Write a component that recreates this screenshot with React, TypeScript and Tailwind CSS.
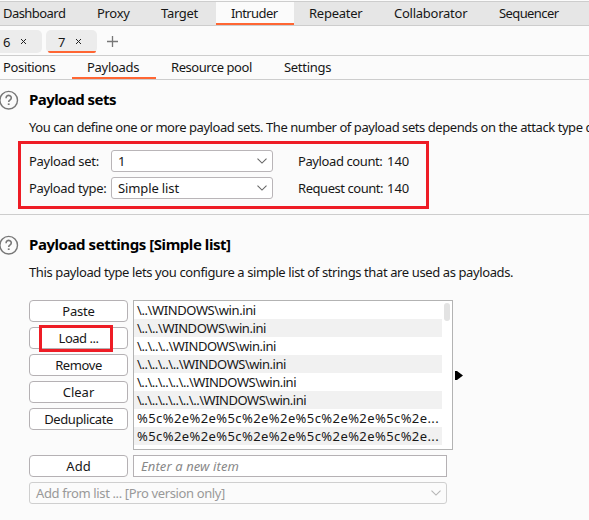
import React from "react";

const tabs = [
  { label: "Dashboard", cls: "w-[81px] pl-[3px] tracking-[-0.55px]" },
  { label: "Proxy", cls: "w-16 pl-4 tracking-[-0.3px]" },
  { label: "Target", cls: "w-[71px] pl-4 tracking-[-0.3px]" },
  { label: "Intruder", cls: "w-[78px] pl-[15px] bg-[#fbfbfb] border-b-2 border-[#ff6633] tracking-[-0.6px]" },
  { label: "Repeater", cls: "w-[85px] pl-[15px] tracking-[-0.25px]" },
  { label: "Collaborator", cls: "w-[105px] pl-[15px] tracking-[-0.25px]" },
  { label: "Sequencer", cls: "w-[105px] pl-[15px] tracking-[-0.6px]" },
];

const subTabs = [
  { label: "Positions", cls: "w-[72px] pl-[3px] tracking-[-0.35px]" },
  { label: "Payloads", cls: "w-[84px] pl-[15px] border-b-2 border-[#ff6633] tracking-[-0.3px]" },
  { label: "Resource pool", cls: "w-[113px] pl-[15px] tracking-[-0.45px]" },
  { label: "Settings", cls: "w-[90px] pl-[15px] tracking-[-0.3px]" },
];

const payloads = [
  { text: "\\..\\WINDOWS\\win.ini", cls: "tracking-[-0.4px]" },
  { text: "\\..\\..\\WINDOWS\\win.ini", cls: "tracking-[-0.42px]" },
  { text: "\\..\\..\\..\\WINDOWS\\win.ini", cls: "tracking-[-0.44px]" },
  { text: "\\..\\..\\..\\..\\WINDOWS\\win.ini", cls: "tracking-[-0.46px]" },
  { text: "\\..\\..\\..\\..\\..\\WINDOWS\\win.ini", cls: "tracking-[-0.47px]" },
  { text: "\\..\\..\\..\\..\\..\\..\\WINDOWS\\win.ini", cls: "tracking-[-0.48px]" },
  { text: "%5c%2e%2e%5c%2e%2e%5c%2e%2e%5c%2e...", cls: "tracking-[0.41px]" },
  { text: "%5c%2e%2e%5c%2e%2e%5c%2e%2e%5c%2e...", cls: "tracking-[0.41px]" },
];

function Help() {
  return (
    <svg className="-ml-px h-5 w-5 shrink-0" viewBox="0 0 20 20" fill="none" stroke="#777" strokeWidth="1.4">
      <circle cx="9.7" cy="10.2" r="8.8" />
      <path d="M7.1 8.2V7.9a2.6 2.4 0 1 1 4.1 1.9c-1 .7-1.5 1-1.5 2.1" strokeWidth="1.6" />
      <path d="M8.8 14.2h1.8" strokeWidth="1.6" />
    </svg>
  );
}

function Chevron({ color }: { color: string }) {
  return (
    <svg className="mr-[5px] h-[6px] w-[10px] shrink-0" viewBox="0 0 10 6" fill="none" stroke={color} strokeWidth="1.1">
      <path d="M.5.7 5 5.1 9.5.7" />
    </svg>
  );
}

function Cross() {
  return (
    <svg className="h-[7px] w-[7px]" viewBox="0 0 7 7" stroke="#222" strokeWidth="1">
      <path d="m1 1 5 5M6 1 1 6" />
    </svg>
  );
}

function Select({ value }: { value: string }) {
  return (
    <div className="flex h-[22px] w-[162px] items-center justify-between rounded-[3px] border border-[#b9b5b8] bg-white pl-[6px] tracking-[-0.12px]">
      <span>{value}</span>
      <Chevron color="#666" />
    </div>
  );
}

function Button({ label, cls = "" }: { label: string; cls?: string }) {
  return (
    <div className={`flex h-[22px] w-[99px] items-center justify-center rounded-[4px] border border-[#b5b1b4] bg-white ${cls}`}>
      {label}
    </div>
  );
}

export default function App() {
  return (
    <div className="flex h-[520px] w-[589px] flex-col overflow-hidden whitespace-pre bg-[#fbfbfb] font-['Noto_Sans',sans-serif] text-[13px] leading-[18px] text-[#171717]">
      <nav className="mt-px flex h-[25px] shrink-0 border-y border-[#cdcdcd] bg-[#e6e6e6]">
        {tabs.map((t) => (
          <div key={t.label} className={`shrink-0 pt-[2px] ${t.cls}`}>{t.label}</div>
        ))}
      </nav>
      <div className="flex h-[30px] shrink-0 border-b border-[#cdcdcd] pt-1">
        <div className="flex h-[23px] w-[42px] items-center gap-[10px] rounded-r-[5px] bg-[#ececec] pl-[3px]">
          6<Cross />
        </div>
        <div className="relative ml-1 flex h-[23px] w-[51px] items-center gap-[10px] rounded-[5px] bg-[#ececec] pl-3">
          7<Cross />
          <span className="absolute bottom-0 left-[2px] h-[2px] w-[48px] rounded-b-[2px] bg-[#ff6633]" />
        </div>
        <svg className="ml-[10px] mt-[6px] h-[11px] w-[11px]" viewBox="0 0 11 11" stroke="#777" strokeWidth="1.3">
          <path d="M5.5 0v11M0 5.5h11" />
        </svg>
      </div>
      <nav className="flex h-[24px] shrink-0 border-b border-[#cdcdcd]">
        {subTabs.map((t) => (
          <div key={t.label} className={`shrink-0 pt-[2px] ${t.cls}`}>{t.label}</div>
        ))}
      </nav>

      <section className="h-[135px] shrink-0 border-b border-[#cdcdcd]">
        <div className="flex items-center pt-[10px]">
          <Help />
          <h2 className="-mt-[2px] ml-[10px] text-[15px] font-bold leading-5 tracking-[-0.56px] text-black">Payload sets</h2>
        </div>
        <p className="ml-[29px] mt-2 tracking-[-0.44px]">You can define one or more payload sets. The number of payload sets depends on the attack type d</p>
        <div className="ml-[18px] mt-[5px] grid h-[68px] w-[411px] grid-cols-[82px_187px_89px_1fr] grid-rows-[22px_22px] items-center gap-y-[5px] border-[3px] border-[#ee1c25] pl-2 pt-[6px]">
          <span className="tracking-[-0.3px]">Payload set:</span>
          <Select value="1" />
          <span className="tracking-[-0.4px]">Payload count:</span>
          <span>140</span>
          <span className="tracking-[-0.35px]">Payload type:</span>
          <Select value="Simple list" />
          <span className="tracking-[-0.45px]">Request count:</span>
          <span>140</span>
        </div>
      </section>

      <section className="flex flex-col">
        <div className="flex items-center pt-5">
          <Help />
          <h2 className="-mt-[2px] ml-[10px] text-[15px] font-bold leading-5 tracking-[-0.44px] text-black">Payload settings [Simple list]</h2>
        </div>
        <p className="ml-[29px] mt-2 tracking-[-0.39px]">This payload type lets you configure a simple list of strings that are used as payloads.</p>
        <div className="ml-[29px] mt-[19px] flex">
          <div className="flex w-[99px] flex-col gap-[5px]">
            <Button label="Paste" cls="tracking-[-0.2px]" />
            <div className="relative">
              <Button label="Load ..." cls="tracking-[-0.5px]" />
              <span className="absolute left-[10px] top-[-2px] h-[27px] w-[74px] border-[3px] border-[#ee1c25]" />
            </div>
            <Button label="Remove" cls="tracking-[-0.4px]" />
            <Button label="Clear" />
            <Button label="Deduplicate" cls="tracking-[-0.4px]" />
          </div>
          <div className="ml-[5px] flex h-[150px] w-[320px] border border-[#b3b3b3] bg-white">
            <div className="w-[308px]">
              {payloads.map((p, i) => (
                <div key={i} className={`h-[18px] pl-[3px] even:bg-[#f1f1f1] ${p.cls}`}>{p.text}</div>
              ))}
            </div>
            <div className="ml-[2px] mt-[2px] h-[18px] w-[6px] rounded-full bg-[#e3e3e3]" />
          </div>
          <svg className="ml-[2px] mt-[71px] h-[9px] w-2" viewBox="0 0 8 9">
            <path d="M0 0h2l6 4.5L2 9H0z" />
          </svg>
        </div>
        <div className="ml-[29px] mt-[5px] flex gap-[5px]">
          <Button label="Add" />
          <div className="flex h-[22px] w-[314px] items-center border border-[#b5b1b4] bg-white pl-[7px] italic tracking-[0.1px] text-[#888]">Enter a new item</div>
        </div>
        <div className="ml-[29px] mt-[5px] flex h-[22px] w-[418px] items-center justify-between rounded-[3px] border border-[#cfcfcf] pl-[6px] tracking-[-0.37px] text-[#999]">
          <span>Add from list ... [Pro version only]</span>
          <Chevron color="#b5b5b5" />
        </div>
      </section>
    </div>
  );
}
